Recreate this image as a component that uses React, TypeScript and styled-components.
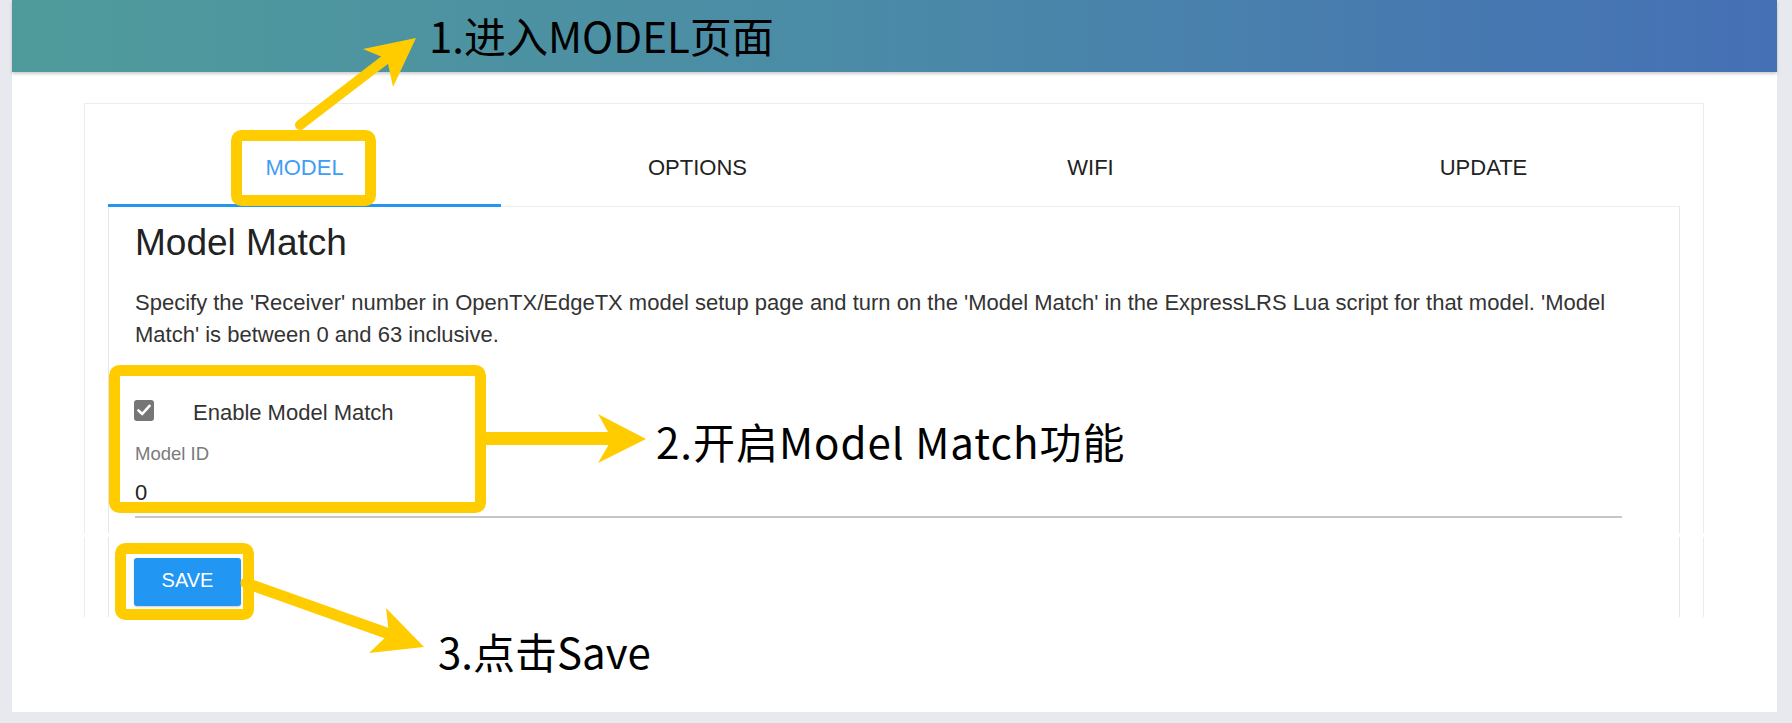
import React from 'react';
import styled, { createGlobalStyle } from 'styled-components';

const GlobalStyle = createGlobalStyle`
  html, body { margin: 0; padding: 0; background: #e8e9ee; overflow: hidden; }
  body { font-family: "Liberation Sans", Arial, sans-serif; }
  * { box-sizing: border-box; }
`;

const Stage = styled.div`
  position: relative;
  width: 1792px;
  height: 723px;
  overflow: hidden;
  background: #e8e9ee;
`;

const Page = styled.div`
  margin: 0 15px 0 12px;
  height: 712px;
  background: #ffffff;
  display: flex;
  flex-direction: column;
`;

const Header = styled.header`
  position: relative;
  z-index: 1;
  flex: none;
  height: 72px;
  background: linear-gradient(90deg, #4f9b9b 0%, #4b8ca6 45%, #4570b5 100%);
  box-shadow: 0 2px 3px rgba(0, 0, 0, 0.2);
`;

const Main = styled.main`
  padding: 31px 73px 0 72px;
  display: flex;
  flex-direction: column;
  gap: 4px;
`;

const Card = styled.section`
  border: 1px solid #ececec;
  border-bottom: none;
  padding: 0 23px;
  background: #fff;
`;

const TabBar = styled.nav`
  margin-top: 24px;
  display: grid;
  grid-template-columns: repeat(4, 1fr);
  box-shadow: inset 0 -1px 0 #ededed;
`;

const Tab = styled.div<{ $active?: boolean }>`
  height: 79px;
  padding-top: 3px;
  display: flex;
  align-items: center;
  justify-content: center;
  font-size: 22px;
  text-transform: uppercase;
  color: ${(p) => (p.$active ? '#3f9ef3' : '#222222')};
  border-bottom: 3px solid ${(p) => (p.$active ? '#2196f3' : 'transparent')};
`;

const FormPanel = styled.div`
  height: 326px;
  border-left: 1px solid #e6e6e6;
  border-right: 1px solid #e6e6e6;
  padding: 14px 57px 0 26px;
  display: flex;
  flex-direction: column;
`;

const Heading = styled.h2`
  margin: 0;
  font-size: 37px;
  line-height: 44px;
  font-weight: 400;
  color: #222;
`;

const Description = styled.p`
  margin: 22px 0 0;
  font-size: 22px;
  line-height: 32px;
  color: #333;
`;

const CheckRow = styled.label`
  margin-top: 43px;
  height: 32px;
  display: flex;
  align-items: center;
  font-size: 22px;
  color: #333;
`;

const CheckBox = styled.span`
  width: 20px;
  height: 21px;
  margin: 0 39px 0 -1px;
  border-radius: 3px;
  background: #767676;
  display: flex;
  align-items: center;
  justify-content: center;
`;

const CheckLabel = styled.span`
  padding-top: 5px;
`;

const FieldLabel = styled.div`
  margin-top: 16px;
  font-size: 18.5px;
  line-height: 24px;
  color: #7a7a7a;
`;

const FieldValue = styled.div`
  margin-top: 12px;
  font-size: 22px;
  line-height: 30px;
  color: #222;
  padding-bottom: 8px;
  border-bottom: 2px solid #c6c6c6;
`;

const ActionCard = styled(Card)`
  height: 80px;
  border-top: none;
`;

const ActionPanel = styled.div`
  height: 80px;
  border-left: 1px solid #e6e6e6;
  border-right: 1px solid #e6e6e6;
  padding: 21px 0 0 25px;
`;

const SaveButton = styled.button`
  width: 107px;
  height: 48px;
  padding: 0 0 3px;
  border: none;
  border-radius: 3px;
  background: #2196f3;
  color: #fff;
  font: 400 20px "Liberation Sans", Arial, sans-serif;
  text-transform: uppercase;
  box-shadow: 0 1px 2px rgba(0, 0, 0, 0.2);
`;

const Overlay = styled.svg`
  position: absolute;
  z-index: 2;
  top: 0;
  left: 0;
  pointer-events: none;
`;

const Note = styled.div<{ $x: number; $y: number; $spacing?: number }>`
  position: absolute;
  z-index: 3;
  left: ${(p) => p.$x}px;
  top: ${(p) => p.$y}px;
  font: 400 42px/42px "Noto Sans CJK SC", "Noto Sans", sans-serif;
  letter-spacing: ${(p) => p.$spacing ?? 0}px;
  color: #000;
  white-space: nowrap;
`;

const Y = '#ffcc00';

export default function App() {
  return (
    <Stage>
      <GlobalStyle />
      <Page>
        <Header />
        <Main>
          <Card>
            <TabBar>
              <Tab $active>Model</Tab>
              <Tab>Options</Tab>
              <Tab>WiFi</Tab>
              <Tab>Update</Tab>
            </TabBar>
            <FormPanel>
              <Heading>Model Match</Heading>
              <Description>
                Specify the 'Receiver' number in OpenTX/EdgeTX model setup page and turn on the 'Model Match' in the
                ExpressLRS Lua script for that model. 'Model Match' is between 0 and 63 inclusive.
              </Description>
              <CheckRow>
                <CheckBox>
                  <svg width="14" height="12" viewBox="0 0 14 12">
                    <path d="M1.5 6.5 L5.2 10 L12.5 1.8" fill="none" stroke="#fff" strokeWidth="2.6" strokeLinecap="round" strokeLinejoin="round" />
                  </svg>
                </CheckBox>
                <CheckLabel>Enable Model Match</CheckLabel>
              </CheckRow>
              <FieldLabel>Model ID</FieldLabel>
              <FieldValue>0</FieldValue>
            </FormPanel>
          </Card>
          <ActionCard>
            <ActionPanel>
              <SaveButton>Save</SaveButton>
            </ActionPanel>
          </ActionCard>
        </Main>
      </Page>

      <Overlay width="1792" height="723" viewBox="0 0 1792 723">
        <rect x="236.5" y="135.5" width="134" height="65" rx="5" fill="none" stroke={Y} strokeWidth="11" />
        <rect x="114.5" y="370.5" width="366" height="137" rx="5" fill="none" stroke={Y} strokeWidth="11" />
        <rect x="120.5" y="548.5" width="128" height="66" rx="5" fill="none" stroke={Y} strokeWidth="11" />

        <line x1="300" y1="125" x2="390" y2="56" stroke={Y} strokeWidth="10" strokeLinecap="round" />
        <polygon points="416,38 363,49 387,59 393,87" fill={Y} />

        <line x1="486" y1="438.5" x2="614" y2="438.5" stroke={Y} strokeWidth="13" />
        <polygon points="646,439 598,414 612,439 598,463" fill={Y} />

        <line x1="246" y1="583" x2="392" y2="635" stroke={Y} strokeWidth="11" strokeLinecap="round" />
        <polygon points="424,647 386,608 389,634 369,653" fill={Y} />
      </Overlay>

      <Note $x={429} $y={14}>1.进入MODEL页面</Note>
      <Note $x={656} $y={420} $spacing={1}>2.开启Model Match功能</Note>
      <Note $x={438} $y={630}>3.点击Save</Note>
    </Stage>
  );
}
